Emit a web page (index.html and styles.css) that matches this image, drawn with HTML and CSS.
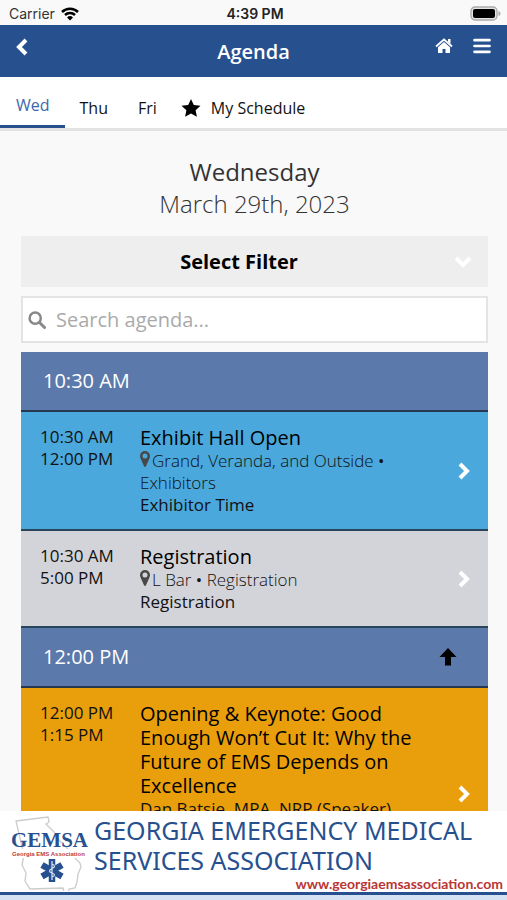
FILE: index.html
```html
<!DOCTYPE html>
<html lang="en">
<head>
<meta charset="utf-8">
<meta name="viewport" content="width=device-width, initial-scale=1">
<title>Agenda</title>
<link rel="stylesheet" href="styles.css">
</head>
<body>
<svg class="defs" aria-hidden="true">
  <symbol id="chevron" viewBox="0 0 12 18"><path d="M2 2l7 7-7 7" fill="none" stroke="currentColor" stroke-width="4"/></symbol>
  <symbol id="pin" viewBox="0 0 10 16"><path fill="currentColor" fill-rule="evenodd" d="M5 0a5 5 0 0 1 5 5c0 1.300-.4 2-.8 3L6 15.200q-1 1.400-2 0L.8 8C.4 7 0 6.300 0 5a5 5 0 0 1 5-5zm0 2.600a2.500 2.500 0 1 0 0 5 2.500 2.500 0 0 0 0-5z"/></symbol>
</svg>

<div class="status">
  <div class="carrier">Carrier
    <svg width="18" height="14" viewBox="0 0 18 14" aria-hidden="true">
      <path d="M1 5a11.500 11.500 0 0 1 16 0M4 8a7.200 7.200 0 0 1 10 0" fill="none" stroke="#000" stroke-width="2.500"/>
      <path d="M9 13.500L6 10.500a4.300 4.300 0 0 1 6 0z"/>
    </svg>
  </div>
  <div class="clock">4:39 PM</div>
  <svg class="battery" width="31" height="15" viewBox="0 0 31 15" aria-hidden="true">
    <rect x="1" y="1" width="26" height="13" rx="4" fill="#e4e4e4" stroke="#aaa" stroke-width="1.300"/>
    <rect x="3" y="3" width="22" height="9" rx="2"/>
    <path d="M28.500 5q2 .5 2 2.500t-2 2.500z" fill="#aaa"/>
  </svg>
</div>

<header class="bar">
  <button class="icon-btn" aria-label="Back"><svg class="flip" width="12" height="18"><use href="#chevron"/></svg></button>
  <h1>Agenda</h1>
  <div class="actions">
    <a class="icon-btn" href="#" aria-label="Home">
      <svg width="18" height="16" viewBox="0 0 18 16"><path d="M1 8.500l8-7 8 7" fill="none" stroke="#fff" stroke-width="1.800"/><path d="M13 1h2.500v5L13 4zM9 4l6 5.200V15h-4.500v-4h-3v4H3V9.200z" fill="#fff"/></svg>
    </a>
    <button class="icon-btn" aria-label="Menu">
      <svg width="18" height="16" viewBox="0 0 18 16"><path d="M1.500 2.200h15M1.500 8h15M1.500 13.800h15" stroke="#fff" stroke-width="2.700" stroke-linecap="round"/></svg>
    </button>
  </div>
</header>

<nav class="tabs">
  <a class="tab active" href="#">Wed</a>
  <a class="tab" href="#">Thu</a>
  <a class="tab" href="#">Fri</a>
  <a class="tab starred" href="#"><svg width="20" height="18" viewBox="0 0 20 18" aria-hidden="true"><path d="M10 0l2.800 5.900 6.700.8-4.900 4.500 1.300 6.600L10 14.500l-5.900 3.300 1.300-6.600L.5 6.700l6.700-.8z"/></svg>My Schedule</a>
</nav>

<main class="content">
  <h2 class="date">Wednesday<span>March 29th, 2023</span></h2>
  <button class="filter"><span>Select Filter</span><svg width="12" height="18" aria-hidden="true"><use href="#chevron"/></svg></button>
  <label class="search">
    <svg width="18" height="18" viewBox="0 0 18 18" aria-hidden="true"><path d="M11.500 11.500l5 5" stroke="#888" stroke-width="3" stroke-linecap="round"/><circle cx="7.200" cy="7.200" r="5.600" fill="none" stroke="#888" stroke-width="2.500"/></svg>
    <input type="search" placeholder="Search agenda..." aria-label="Search agenda">
  </label>

  <section class="agenda">
    <h3 class="slot">10:30 AM</h3>
    <a class="event blue" href="#">
      <div class="time">10:30 AM<br>12:00 PM</div>
      <div class="info">
        <h4>Exhibit Hall Open</h4>
        <p><svg class="pin" width="10" height="16"><use href="#pin"/></svg><span class="light">Grand, Veranda, and Outside</span> • <span class="light">Exhibitors</span></p>
        <p>Exhibitor Time</p>
      </div>
      <svg class="go" width="12" height="18"><use href="#chevron"/></svg>
    </a>
    <a class="event gray" href="#">
      <div class="time">10:30 AM<br>5:00 PM</div>
      <div class="info">
        <h4>Registration</h4>
        <p><svg class="pin" width="10" height="16"><use href="#pin"/></svg><span class="light">L Bar</span> • <span class="light">Registration</span></p>
        <p>Registration</p>
      </div>
      <svg class="go" width="12" height="18"><use href="#chevron"/></svg>
    </a>
    <h3 class="slot">12:00 PM
      <button class="icon-btn top" aria-label="Back to top"><svg width="18" height="18" viewBox="0 0 18 18"><path d="M9 0l8.500 9H12v8.500H6V9H.5z"/></svg></button>
    </h3>
    <a class="event orange" href="#">
      <div class="time">12:00 PM<br>1:15 PM</div>
      <div class="info">
        <h4>Opening &amp; Keynote: Good Enough Won’t Cut It: Why the Future of EMS Depends on Excellence</h4>
        <p>Dan Batsie, MPA, NRP (Speaker)</p>
      </div>
      <svg class="go" width="12" height="18"><use href="#chevron"/></svg>
    </a>
  </section>
</main>

<footer class="sponsor">
  <svg class="logo" width="80" height="76" viewBox="0 0 80 76" role="img" aria-label="GEMSA">
    <path d="M6 6L38 2l1 5-3 2 8 8 5 8 8 8 8 10 5 5 1 4-3 7-1 8-2 6-6 1-1 4-4-1-1-4-33 1-5-8 1-8-4-8 2-10z" fill="#fff" stroke="#ccc" stroke-width="1.300"/>
    <path d="M0 34h80v9H0z" fill="#fff"/>
    <text class="logo-name" x="1" y="32">GEMSA</text>
    <text class="logo-sub" x="2" y="41">Georgia EMS Association</text>
    <path d="M42 44v23M32 50l20 11.500M32 61.500L52 50" stroke="#27508f" stroke-width="6.500"/>
    <path d="M42 46v19M42 49q5 2 0 4.500t0 4.500 0 4" fill="none" stroke="#dbe8f7" stroke-width="1.200"/>
  </svg>
  <div class="sponsor-text">
    <strong>GEORGIA EMERGENCY MEDICAL SERVICES ASSOCIATION</strong>
    <a href="#">www.georgiaemsassociation.com</a>
  </div>
</footer>
</body>
</html>
```
FILE: styles.css
```css
* { box-sizing: border-box; }
body {
  margin: 0;
  height: 100vh;
  display: flex;
  flex-direction: column;
  overflow: hidden;
  background: #f9f9f9;
  color: #111;
  font-family: "Open Sans", sans-serif;
  font-size: 17px;
  line-height: 22px;
}
h1, h2, h3, h4, p { margin: 0; font-weight: 400; }
a { color: inherit; text-decoration: none; }
svg { display: block; flex: none; }
button { font: inherit; border: 0; padding: 0; background: none; color: inherit; }
.defs { position: absolute; width: 0; height: 0; }

.status {
  display: grid;
  grid-template-columns: 1fr auto 1fr;
  align-items: center;
  height: 25px;
  padding: 2px 6px 0 9px;
  flex: none;
  font-family: Inter, sans-serif;
  font-size: 14px;
}
.carrier { display: flex; align-items: center; gap: 6px; color: #333; }
.clock { font-weight: 600; color: #222; }
.battery { justify-self: end; }

.bar {
  display: grid;
  grid-template-columns: 1fr auto 1fr;
  flex: none;
  height: 52px;
  padding: 13px 16px 0;
  background: #27508f;
  color: #fff;
}
.bar h1 { font-size: 20px; font-weight: 600; line-height: 28px; }
.icon-btn { display: block; align-self: start; justify-self: start; }
.flip { transform: scaleX(-1); }
.actions { display: flex; gap: 20px; justify-self: end; }

.tabs {
  display: flex;
  flex: none;
  height: 54px;
  background: #fff;
  border-bottom: 3px solid #e2e2e2;
  font-size: 16px;
}
.tab { display: flex; align-items: center; gap: 10px; padding: 10px 15px 0; }
.tab.active { padding: 8px 15px 0 16px; color: #3d67ab; border-bottom: 3px solid #27508f; }
.tab.starred { padding-left: 9px; }

.content { flex: 1; min-height: 0; overflow: hidden; padding: 25px 19px 0 21px; }
.date { text-align: center; font-size: 24px; line-height: 32px; color: #333; }
.date span { display: block; font-weight: 300; }
.filter {
  display: grid;
  grid-template-columns: 1fr auto;
  align-items: center;
  width: 100%;
  height: 51px;
  margin-top: 16px;
  padding-right: 19px;
  background: #eee;
  color: #000;
  font-size: 20px;
  font-weight: 700;
}
.filter svg { color: #fff; transform: rotate(90deg); }
.search {
  display: flex;
  align-items: center;
  gap: 10px;
  height: 47px;
  margin: 9px 0;
  padding: 0 5px;
  background: #fff;
  border: 2px solid #e4e4e4;
}
.search input { flex: 1; min-width: 0; height: 32px; border: 0; padding: 0; background: none; font: inherit; font-size: 20px; line-height: 32px; outline: 0; }
.search input::placeholder { color: #aaa; }

.slot {
  display: flex;
  align-items: center;
  justify-content: space-between;
  height: 60px;
  padding: 0 31px 0 22px;
  background: #5b79ab;
  border-bottom: 2px solid #263750;
  color: #fff;
  font-size: 20px;
}
.top { align-self: center; color: #000; }
.event {
  display: flex;
  padding: 13px 18px 13px 19px;
  border-bottom: 2px solid #27465c;
}
.time { width: 100px; flex: none; padding-top: 1px; }
.info { flex: 1; min-width: 0; padding-right: 40px; }
.info h4 { font-size: 20px; line-height: 24px; color: #000; padding-top: 1px; }
.light { font-weight: 300; }
.pin { display: inline-block; margin-right: 2px; color: #484848; }
.go { align-self: center; color: #fff; }
.blue { background: #4aa8dd; }
.gray { background: #d3d4da; }
.orange { background: #e99e0c; min-height: 214px; }

.sponsor {
  display: flex;
  flex: none;
  height: 89px;
  padding: 4px 4px 0 10px;
  gap: 4px;
  background: linear-gradient(#27508f, #27508f) 0 81px / 100% 3px no-repeat, linear-gradient(#fff 84px, #d5e2f3 84px);
}
.logo-name { font: bold 21px "Liberation Serif", serif; fill: #27508f; }
.logo-sub { font: bold 6px "Liberation Sans", sans-serif; fill: #c23b36; }
.sponsor-text { flex: 1; display: flex; flex-direction: column; color: #27508f; }
.sponsor strong { font: 400 25px/30px "Noto Sans", sans-serif; }
.sponsor a { align-self: flex-end; color: #b93634; font: 700 14px/18px Lato, sans-serif; }
```
